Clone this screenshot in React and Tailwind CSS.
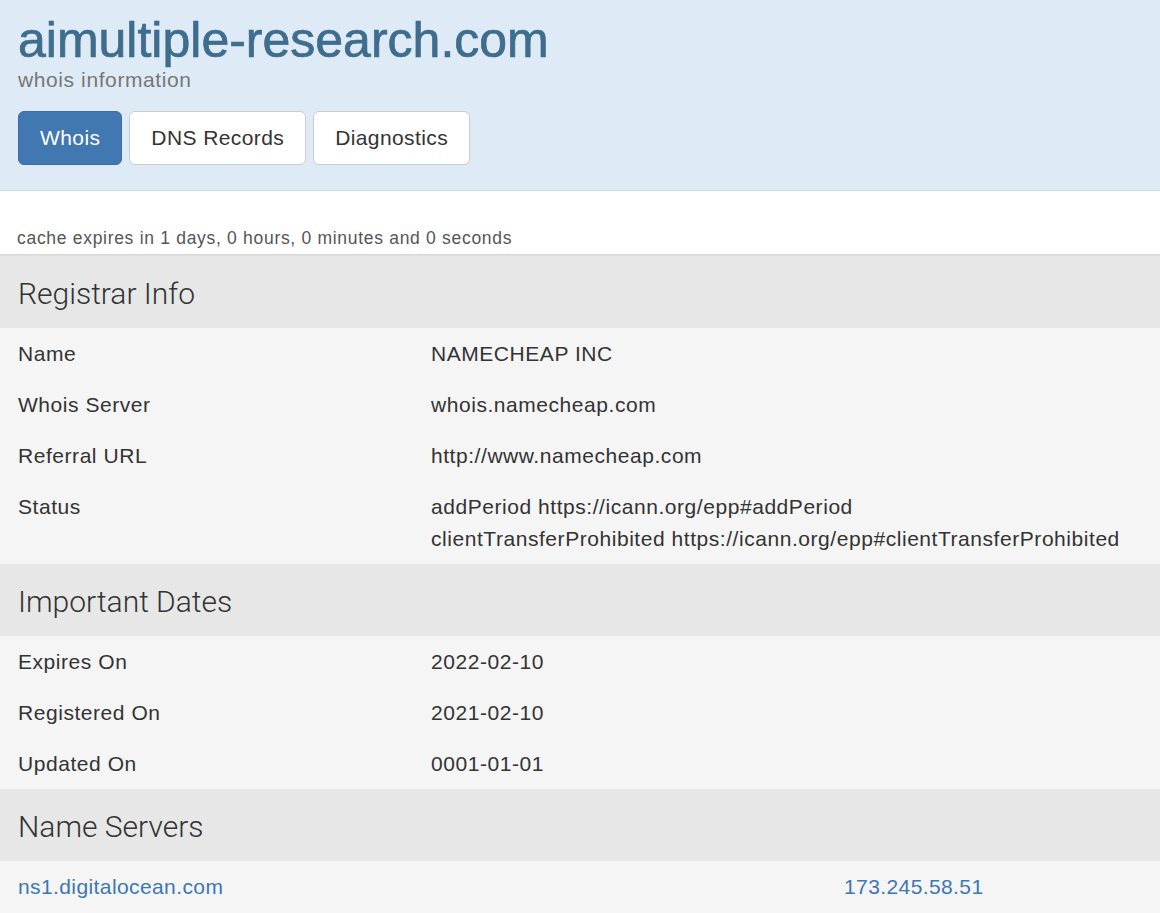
import React from 'react';

const registrar = [
  ['Name', ['NAMECHEAP INC']],
  ['Whois Server', ['whois.namecheap.com']],
  ['Referral URL', ['http://www.namecheap.com']],
  ['Status', ['addPeriod https://icann.org/epp#addPeriod', 'clientTransferProhibited https://icann.org/epp#clientTransferProhibited']],
];

const dates = [
  ['Expires On', ['2022-02-10']],
  ['Registered On', ['2021-02-10']],
  ['Updated On', ['0001-01-01']],
];

const tabs = ['Whois', 'DNS Records', 'Diagnostics'];

function SectionTitle({ children }) {
  return (
    <div className="flex h-[72px] items-center bg-[#e6e7e6] px-[18px] pt-[2px] font-['Roboto','Liberation_Sans',sans-serif] text-[30px] font-light text-[#333]">
      {children}
    </div>
  );
}

function InfoRow({ label, values }) {
  return (
    <div className="grid grid-cols-[413px_1fr] px-[18px] py-[9.5px] text-[21px] leading-[32px] tracking-[0.55px] text-[#333]">
      <div>{label}</div>
      <div>
        {values.map((v) => <div key={v}>{v}</div>)}
      </div>
    </div>
  );
}

export default function App() {
  return (
    <div className="min-h-[913px] bg-[#f5f5f5] font-['Liberation_Sans',Arial,sans-serif]">
      <header className="h-[191px] border-b border-[#c8e3ef] bg-[#deeaf6] px-[18px] pt-[11px]">
        <h1 className="text-[50px] leading-[58px] text-[#3e6d8d] [-webkit-text-stroke:0.7px_#3e6d8d]">aimultiple-research.com</h1>
        <p className="mt-[-3px] text-[21px] leading-[28px] tracking-[0.6px] text-[#777]">whois information</p>
        <div className="mt-[17px] flex gap-[7px]">
          {tabs.map((t, i) => (
            <button
              key={t}
              className={i === 0
                ? 'h-[54px] rounded-[6px] border border-[#3a6ea7] bg-[#4178b2] px-[21px] text-[21px] tracking-[0.4px] text-white'
                : 'h-[54px] rounded-[6px] border border-[#ccc] bg-white px-[21px] text-[21px] tracking-[0.4px] text-[#333]'}
            >
              {t}
            </button>
          ))}
        </div>
      </header>

      <div className="flex h-[65px] items-end border-b-2 border-[#ddd] bg-white px-[17px] pb-[3px] text-[17.5px] tracking-[0.7px] text-[#555]">
        cache expires in 1 days, 0 hours, 0 minutes and 0 seconds
      </div>

      <SectionTitle>Registrar Info</SectionTitle>
      <div>
        {registrar.map(([l, v]) => <InfoRow key={l} label={l} values={v} />)}
      </div>

      <SectionTitle>Important Dates</SectionTitle>
      <div>
        {dates.map(([l, v]) => <InfoRow key={l} label={l} values={v} />)}
      </div>

      <SectionTitle>Name Servers</SectionTitle>
      <div className="grid grid-cols-[826px_1fr] px-[18px] py-[9.5px] text-[21px] leading-[32px] tracking-[0.4px] text-[#3d77b4]">
        <a href="#">ns1.digitalocean.com</a>
        <a href="#">173.245.58.51</a>
      </div>
    </div>
  );
}
